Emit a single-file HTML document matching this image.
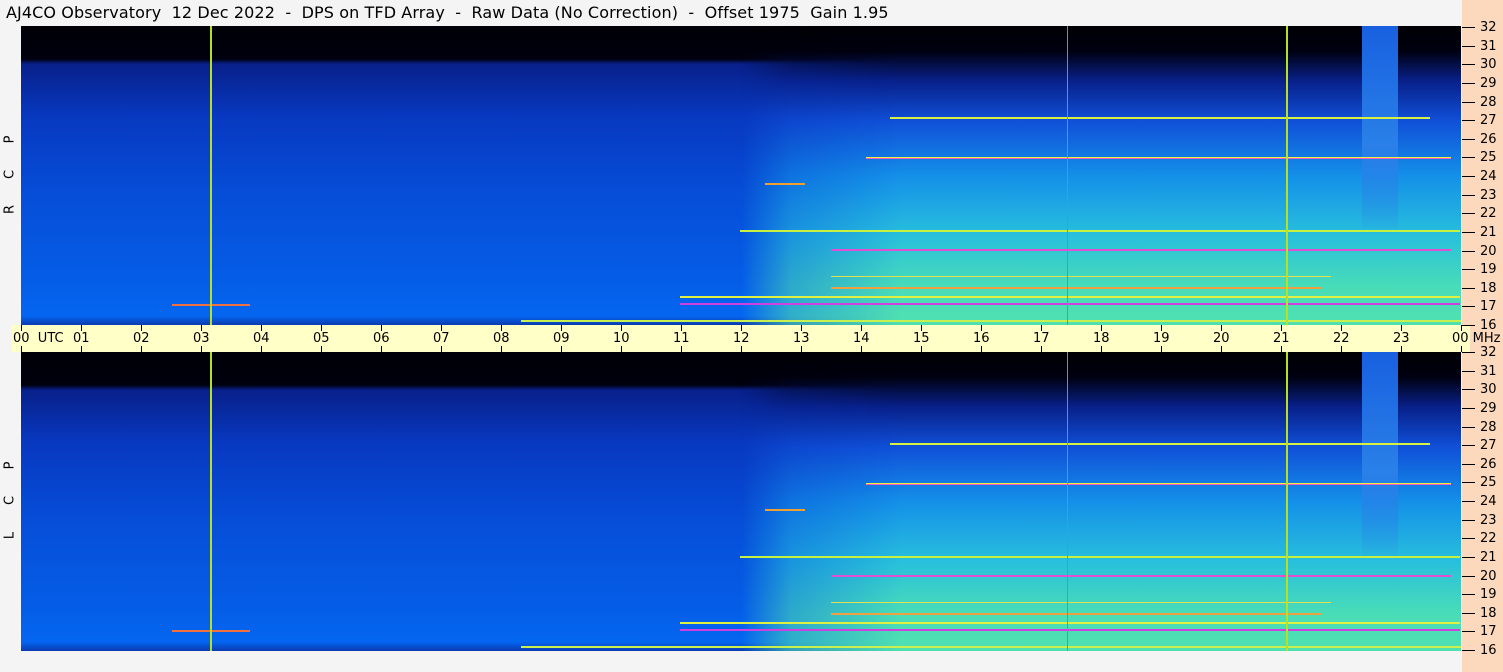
<!DOCTYPE html>
<html><head><meta charset="utf-8"><style>
*{margin:0;padding:0;box-sizing:border-box}
body{width:1503px;height:672px;background:#f4f4f4;position:relative;overflow:hidden;font-family:"DejaVu Sans","Liberation Sans",sans-serif;color:#000}
.title{position:absolute;left:6px;top:3px;font-size:16px;white-space:pre;letter-spacing:0.1px}
.right{position:absolute;left:1462px;top:0;width:41px;height:672px;background:#fcd8bc}
.axis{position:absolute;left:12px;top:325px;width:1458px;height:27px;background:#ffffc8}
.panel{position:absolute;left:21px;width:1440px;height:299px;overflow:hidden;
background:linear-gradient(to bottom,#000006 0,#00000e 33px,#08208a 38px,#0838c0 90px,#064ed8 170px,#055ee8 260px,#0466f0 290px,#0a3ab0 299px)}
.ov{position:absolute;left:720px;top:0;width:720px;height:299px;
background:linear-gradient(to bottom,#000004 0,#000010 25px,#08208a 55px,#1050d8 95px,#1490e8 150px,#28c0dc 210px,#48dcb8 260px,#50e0b0 299px);
-webkit-mask-image:linear-gradient(to right,transparent 0,rgba(0,0,0,.6) 50px,#000 160px);mask-image:linear-gradient(to right,transparent 0,rgba(0,0,0,.6) 50px,#000 160px)}
.h{position:absolute;height:2px}
.v{position:absolute;top:0;width:2px;height:299px}
.t{position:absolute;font-size:13px}
.tk{position:absolute;width:1px;height:6px;background:#000}
.rt{position:absolute;left:1462px;width:13px;height:1px;background:#000}
.rl{position:absolute;left:1480px;font-size:13px;line-height:13px}
.side{position:absolute;left:3px;font-size:13px;transform:rotate(-90deg);width:14px;text-align:center}
</style></head><body>
<div class="title">AJ4CO Observatory  12 Dec 2022  -  DPS on TFD Array  -  Raw Data (No Correction)  -  Offset 1975  Gain 1.95</div>
<div class="right"></div>
<div class="axis"></div>

<div class="panel" style="top:26px">
<div class="ov"></div>
<div style="position:absolute;left:1341px;top:0;width:36px;height:210px;background:linear-gradient(to bottom,#1860e0,#2a80e8 120px,transparent)"></div>
<div class="h" style="left:869px;top:91px;width:540px;background:#d8f040"></div>
<div class="h" style="left:845px;top:131px;width:585px;background:#f060c0;border-top:1px solid #f0f040"></div>
<div class="h" style="left:744px;top:157px;width:40px;background:#f0a030"></div>
<div class="h" style="left:719px;top:204px;width:720px;background:#c8f040"></div>
<div class="h" style="left:810px;top:223px;width:620px;background:#e050d0"></div>
<div class="h" style="left:810px;top:250px;width:500px;background:#e0e050;height:1px"></div>
<div class="h" style="left:810px;top:261px;width:490px;background:#f0a040"></div>
<div class="h" style="left:659px;top:270px;width:780px;background:#e0f040"></div>
<div class="h" style="left:659px;top:277px;width:780px;background:#d040e0"></div>
<div class="h" style="left:151px;top:278px;width:78px;background:#f07040"></div>
<div class="h" style="left:500px;top:294px;width:940px;background:#c8f050"></div>
<div class="v" style="left:189px;background:#b8e020"></div>
<div class="v" style="left:1265px;background:#b8e020"></div>
<div class="v" style="left:1046px;width:1px;background:#30a0f0"></div>
</div>

<div class="panel" style="top:352px">
<div class="ov"></div>
<div style="position:absolute;left:1341px;top:0;width:36px;height:210px;background:linear-gradient(to bottom,#1860e0,#2a80e8 120px,transparent)"></div>
<div class="h" style="left:869px;top:91px;width:540px;background:#d8f040"></div>
<div class="h" style="left:845px;top:131px;width:585px;background:#f060c0;border-top:1px solid #f0f040"></div>
<div class="h" style="left:744px;top:157px;width:40px;background:#f0a030"></div>
<div class="h" style="left:719px;top:204px;width:720px;background:#c8f040"></div>
<div class="h" style="left:810px;top:223px;width:620px;background:#e050d0"></div>
<div class="h" style="left:810px;top:250px;width:500px;background:#e0e050;height:1px"></div>
<div class="h" style="left:810px;top:261px;width:490px;background:#f0a040"></div>
<div class="h" style="left:659px;top:270px;width:780px;background:#e0f040"></div>
<div class="h" style="left:659px;top:277px;width:780px;background:#d040e0"></div>
<div class="h" style="left:151px;top:278px;width:78px;background:#f07040"></div>
<div class="h" style="left:500px;top:294px;width:940px;background:#c8f050"></div>
<div class="v" style="left:189px;background:#b8e020"></div>
<div class="v" style="left:1265px;background:#b8e020"></div>
<div class="v" style="left:1046px;width:1px;background:#30a0f0"></div>
</div>

<div class="side" style="top:132px">P</div>
<div class="side" style="top:167px">C</div>
<div class="side" style="top:202px">R</div>
<div class="side" style="top:458px">P</div>
<div class="side" style="top:493px">C</div>
<div class="side" style="top:528px">L</div>

<div id="ax"></div>
<div id="rax"></div>
<script>
(function(){
var ax='',h;
for(h=0;h<=24;h++){var x=21+60*h;ax+='<div class="tk" style="left:'+x+'px;top:325px"></div><div class="tk" style="left:'+x+'px;top:346px"></div>';
var lab=(h%24<10?'0':'')+(h%24);
if(h==0)ax+='<div class="t" style="left:13px;top:331px">00&nbsp; UTC</div>';
else if(h==24)ax+='<div class="t" style="left:1452px;top:331px">00 MHz</div>';
else ax+='<div class="t" style="left:'+(x-8)+'px;top:331px">'+lab+'</div>';}
document.getElementById('ax').innerHTML=ax;
var r='',m;
for(var p=0;p<2;p++){var t0=p?352:27;for(m=16;m<=32;m++){var y=t0+(32-m)*298/16;
r+='<div class="rt" style="top:'+Math.round(y)+'px"></div><div class="rl" style="top:'+Math.round(y-6)+'px">'+m+'</div>';}}
document.getElementById('rax').innerHTML=r;
})();
</script>
</body></html>
